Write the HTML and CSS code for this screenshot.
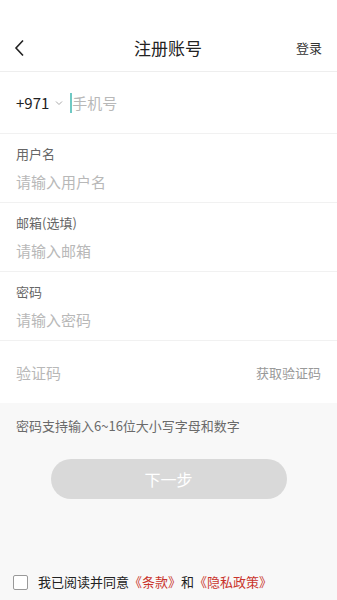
FILE: index.html
```html
<!DOCTYPE html>
<html lang="zh">
<head>
<meta charset="utf-8">
<title>注册账号</title>
<link rel="stylesheet" href="styles.css">
</head>
<body>
<div class="page">
  <div class="status"></div>
  <header class="nav">
    <span class="back">
      <svg width="12" height="18" viewBox="0 0 12 18"><path d="M9 1.5 L2 9 L9 16.5" fill="none" stroke="#222" stroke-width="1.6" stroke-linejoin="miter"/></svg>
    </span>
    <h1 class="title">注册账号</h1>
    <span class="login">登录</span>
  </header>
  <section class="form">
    <div class="row phone">
      <span class="code">+971</span>
      <svg class="caret" width="8" height="6" viewBox="0 0 8 6"><path d="M1 1.5 L4 4.5 L7 1.5" fill="none" stroke="#aaa" stroke-width="1"/></svg>
      <span class="cursor"></span>
      <span class="ph">手机号</span>
    </div>
    <div class="row field">
      <span class="label">用户名</span>
      <span class="ph">请输入用户名</span>
    </div>
    <div class="row field">
      <span class="label">邮箱(选填)</span>
      <span class="ph">请输入邮箱</span>
    </div>
    <div class="row field">
      <span class="label">密码</span>
      <span class="ph">请输入密码</span>
    </div>
    <div class="row verify">
      <span class="ph">验证码</span>
      <span class="get">获取验证码</span>
    </div>
  </section>
  <section class="bottom">
    <p class="hint">密码支持输入6~16位大小写字母和数字</p>
    <button class="next">下一步</button>
    <div class="agree">
      <span class="box"></span>
      <span class="agree-text">我已阅读并同意<span class="link">《条款》</span>和<span class="link">《隐私政策》</span></span>
    </div>
  </section>
</div>
</body>
</html>
```
FILE: styles.css
```css
* { box-sizing: border-box; }
html, body { margin: 0; padding: 0; }
body {
  font-family: "Noto Sans CJK SC", "Noto Sans", sans-serif;
  background: #f8f8f8;
  color: #222;
}
.page {
  width: 337px;
  height: 600px;
  display: flex;
  flex-direction: column;
}
.status { height: 24px; background: #fff; }
.nav {
  height: 48px;
  background: #fff;
  display: flex;
  align-items: center;
  justify-content: space-between;
  padding: 0 15px 0 14px;
  border-bottom: 1px solid #eeeeee;
}
.back { width: 40px; display: flex; align-items: center; }
.title {
  margin: 0;
  font-size: 17px;
  font-weight: normal;
  color: #222;
  line-height: 1;
}
.login {
  width: 40px;
  text-align: right;
  font-size: 13px;
  color: #333;
}
.form { background: #fff; }
.row {
  border-bottom: 1px solid #f1f1f1;
  padding: 0 16px;
}
.phone {
  height: 62px;
  display: flex;
  align-items: center;
}
.code { font-size: 15px; color: #222; }
.caret { margin-left: 6px; }
.cursor {
  width: 2px;
  height: 20px;
  background: #6fc9c4;
  margin-left: 7px;
}
.ph { font-size: 15px; color: #b8b8b8; }
.field {
  height: 69px;
  display: flex;
  flex-direction: column;
  justify-content: center;
  gap: 7px;
  padding-top: 1px;
}
.label { font-size: 13px; color: #666; line-height: 1.4; }
.field .ph { line-height: 1.4; }
.verify {
  height: 62px;
  border-bottom: none;
  display: flex;
  align-items: center;
  justify-content: space-between;
}
.get { font-size: 13px; color: #999; }
.bottom {
  flex: 1;
  display: flex;
  flex-direction: column;
  background: #f8f8f8;
}
.hint {
  margin: 13px 16px 0;
  font-size: 13px;
  color: #6a6a6a;
  line-height: 20px;
}
.next {
  margin: 23px auto 0;
  width: 236px;
  height: 40px;
  border: none;
  border-radius: 20px;
  background: #d9d9d9;
  color: #fff;
  font-family: inherit;
  font-size: 16px;
}
.agree {
  margin-top: auto;
  margin-bottom: 9px;
  padding: 0 13px;
  display: flex;
  align-items: center;
  gap: 10px;
}
.box {
  width: 15px;
  height: 15px;
  border: 1px solid #999;
  border-radius: 2px;
  background: #fff;
}
.agree-text { font-size: 13px; color: #222; line-height: 18px; }
.link { color: #c9342c; }
```
